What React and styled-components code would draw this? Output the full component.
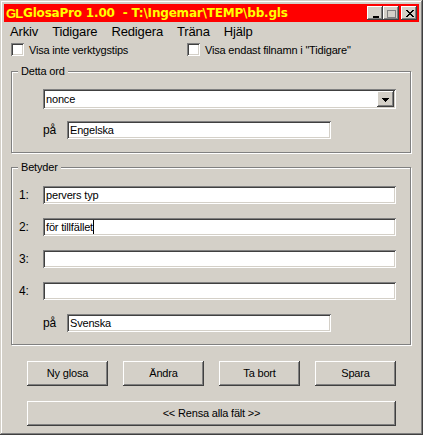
import React from 'react';
import styled, { createGlobalStyle } from 'styled-components';

const Global = createGlobalStyle`
  html, body { margin: 0; padding: 0; background: #d4d0c8; }
  * { box-sizing: border-box; }
`;

const FACE = '#d4d0c8';

const Window = styled.div`
  width: 423px;
  height: 435px;
  background: ${FACE};
  padding: 4px;
  font-family: "Liberation Sans", Arial, sans-serif;
  font-size: 11px;
  letter-spacing: -0.18px;
  color: #000;
  box-shadow: inset -1px -1px 0 #404040, inset 1px 1px 0 ${FACE},
    inset -2px -2px 0 #808080, inset 2px 2px 0 #fff;
  overflow: hidden;
`;

const TitleBar = styled.div`
  height: 18px;
  background: #ff0000;
  color: #ffff00;
  display: flex;
  align-items: center;
  padding: 0 2px 0 2px;
`;

const TitleIcon = styled.span`
  width: 17px;
  font: bold 13px "Liberation Sans", sans-serif;
  letter-spacing: -0.8px;
`;

const TitleText = styled.span`
  flex: 1;
  font: bold 12px "DejaVu Sans", sans-serif;
  letter-spacing: -0.19px;
  white-space: pre;
`;

const CaptionButton = styled.button`
  width: 16px;
  height: 14px;
  margin-left: ${p => p.$gap || 0}px;
  padding: 0;
  border: 0;
  background: ${FACE};
  box-shadow: inset -1px -1px 0 #404040, inset 1px 1px 0 #fff, inset -2px -2px 0 #808080;
  display: flex;
  align-items: center;
  justify-content: center;
`;

const MenuBar = styled.div`
  height: 19px;
  display: flex;
  align-items: center;
  padding-left: 6px;
  gap: 14px;
  font-size: 13px;
  letter-spacing: -0.15px;
`;

const CheckRow = styled.div`
  display: flex;
  padding-left: 7px;
  margin-top: 2px;
  height: 13px;
`;

const CheckItem = styled.label`
  display: flex;
  align-items: center;
  gap: 5px;
  width: ${p => p.$width}px;
  white-space: pre;
`;

const CheckBox = styled.span`
  width: 13px;
  height: 13px;
  background: #fff;
  box-shadow: inset 1px 1px 0 #808080, inset -1px -1px 0 #fff, inset 2px 2px 0 #404040, inset -2px -2px 0 ${FACE};
`;

const Group = styled.div`
  position: relative;
  margin: ${p => p.$top}px 0 0 7px;
  width: 400px;
  height: ${p => p.$height}px;
  border: 1px solid #808080;
  box-shadow: inset 1px 1px 0 #fff, 1px 1px 0 #fff;
  padding: 18px 14px 0 31px;
  display: flex;
  flex-direction: column;
`;

const Legend = styled.span`
  position: absolute;
  top: -7px;
  left: 6px;
  padding: 0 3px;
  background: ${FACE};
  line-height: 13px;
`;

const Row = styled.div`
  display: flex;
  align-items: center;
  height: 18px;
  margin-bottom: ${p => p.$gap || 0}px;
`;

const RowLabel = styled.span`
  width: 24px;
  margin-left: ${p => p.$left || 0}px;
  flex: none;
  font-size: 12px;
`;

const Field = styled.div`
  width: ${p => p.$width}px;
  height: ${p => p.$height || 18}px;
  flex: none;
  background: #fff;
  box-shadow: inset 1px 1px 0 #808080, inset -1px -1px 0 #fff, inset 2px 2px 0 #404040, inset -2px -2px 0 ${FACE};
  padding: 0 3px;
  display: flex;
  align-items: center;
  white-space: pre;
`;

const Caret = styled.span`
  width: 1px;
  height: 14px;
  background: #000;
`;

const DropButton = styled.span`
  margin-left: auto;
  margin-right: -1px;
  width: 17px;
  height: 16px;
  background: ${FACE};
  box-shadow: inset -1px -1px 0 #404040, inset 1px 1px 0 #fff, inset -2px -2px 0 #808080;
  display: flex;
  align-items: center;
  justify-content: center;
`;

const ButtonRow = styled.div`
  display: flex;
  gap: 15px;
  margin: ${p => p.$top}px 0 0 23px;
`;

const Button = styled.button`
  width: ${p => p.$width || 81}px;
  height: 25px;
  border: 0;
  padding: 0 0 1px;
  background: ${FACE};
  font: 11px "Liberation Sans", Arial, sans-serif;
  letter-spacing: -0.18px;
  color: #000;
  box-shadow: inset -1px -1px 0 #404040, inset 1px 1px 0 #fff, inset -2px -2px 0 #808080;
`;

const Glyph = ({ d, fill = 'none', stroke = '#000', w = 9, h = 9, sw = 1 }) => (
  <svg width={w} height={h} viewBox={`0 0 ${w} ${h}`} shapeRendering="crispEdges">
    <path d={d} fill={fill} stroke={stroke} strokeWidth={sw} />
  </svg>
);

export default function App() {
  return (
    <Window>
      <Global />
      <TitleBar>
        <TitleIcon>GL</TitleIcon>
        <TitleText>{'GlosaPro 1.00  - T:\\Ingemar\\TEMP\\bb.gls'}</TitleText>
        <CaptionButton><Glyph d="M2 8H8" sw={2} /></CaptionButton>
        <CaptionButton><Glyph d="M0.5 1.5H8.5V8.5H0.5Z M0.5 1H8.5" stroke="#808080" /></CaptionButton>
        <CaptionButton $gap={2}><Glyph d="M1 1L8 8M8 1L1 8M2 1L9 8M9 1L2 8" /></CaptionButton>
      </TitleBar>
      <MenuBar>
        <span>Arkiv</span>
        <span>Tidigare</span>
        <span>Redigera</span>
        <span>Träna</span>
        <span>Hjälp</span>
      </MenuBar>
      <CheckRow>
        <CheckItem $width={176}><CheckBox />Visa inte verktygstips</CheckItem>
        <CheckItem $width={200}><CheckBox />Visa endast filnamn i "Tidigare"</CheckItem>
      </CheckRow>
      <Group $top={15} $height={82}>
        <Legend>Detta ord</Legend>
        <Row $gap={13}>
          <Field $width={353} $height={20}>
            nonce
            <DropButton><Glyph d="M1 1H8M2 2H7M3 3H6M4 4H5" w={9} h={5} /></DropButton>
          </Field>
        </Row>
        <Row>
          <RowLabel>på</RowLabel>
          <Field $width={264}>Engelska</Field>
        </Row>
      </Group>
      <Group $top={14} $height={178}>
        <Legend>Betyder</Legend>
        <Row $gap={14}><RowLabel $left={-24}>1:</RowLabel><Field $width={353}>pervers typ</Field></Row>
        <Row $gap={14}><RowLabel $left={-24}>2:</RowLabel><Field $width={353}>för tillfället<Caret /></Field></Row>
        <Row $gap={14}><RowLabel $left={-24}>3:</RowLabel><Field $width={353} /></Row>
        <Row $gap={14}><RowLabel $left={-24}>4:</RowLabel><Field $width={353} /></Row>
        <Row><RowLabel>på</RowLabel><Field $width={264}>Svenska</Field></Row>
      </Group>
      <ButtonRow $top={16}>
        <Button>Ny glosa</Button>
        <Button>Ändra</Button>
        <Button>Ta bort</Button>
        <Button>Spara</Button>
      </ButtonRow>
      <ButtonRow $top={15}>
        <Button $width={369}>{'<< Rensa alla fält >>'}</Button>
      </ButtonRow>
    </Window>
  );
}
